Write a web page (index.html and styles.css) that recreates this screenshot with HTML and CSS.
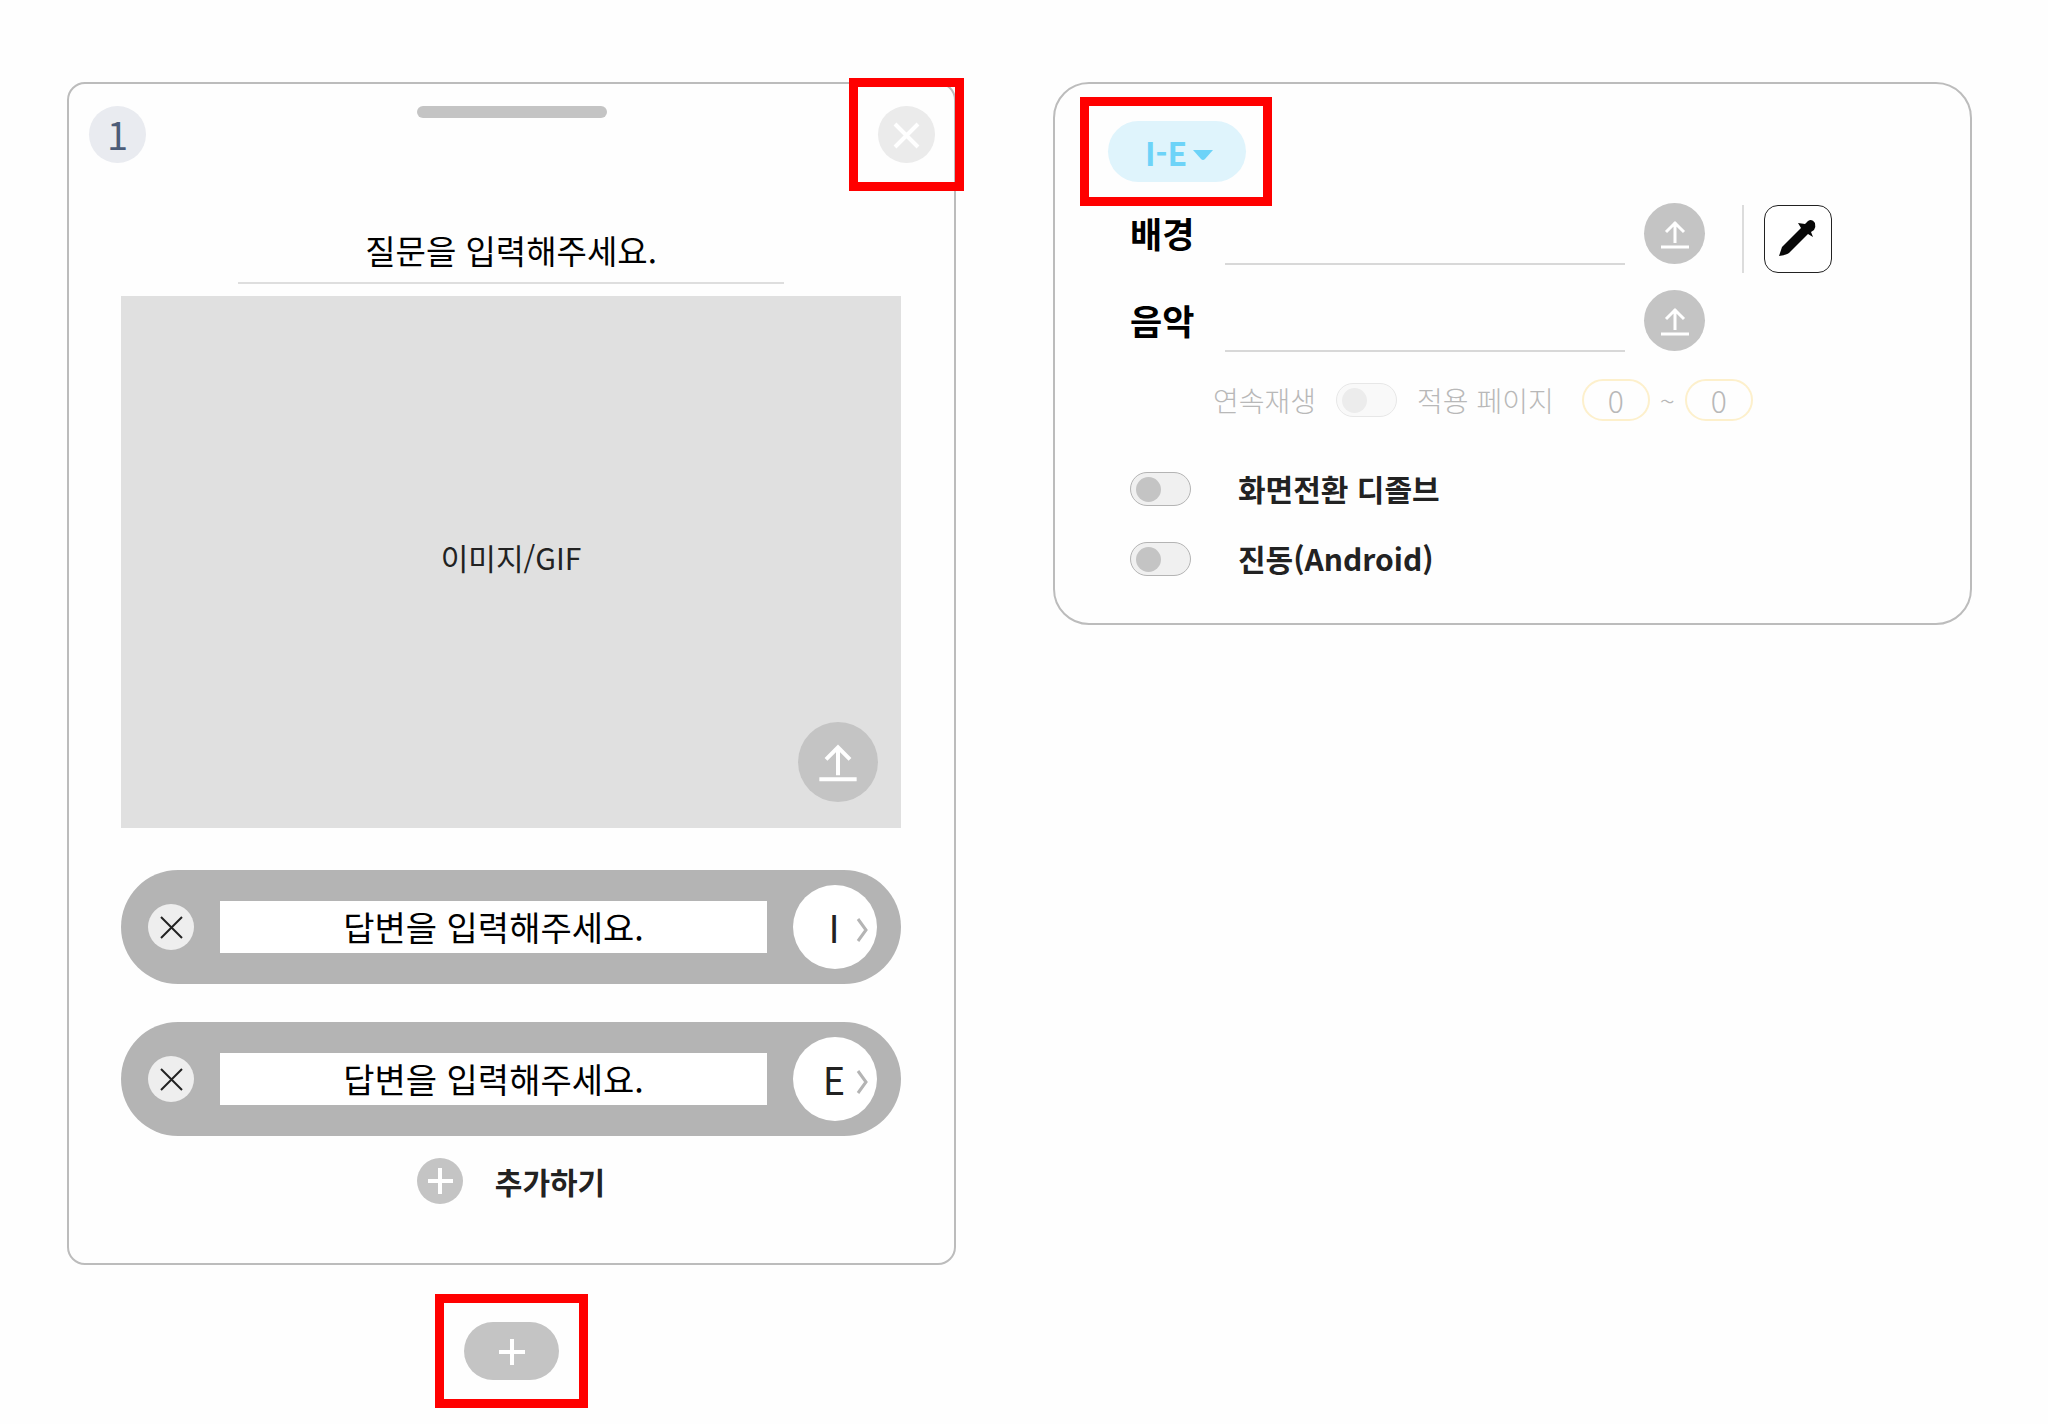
FILE: index.html
```html
<!DOCTYPE html>
<html lang="ko">
<head>
    <meta charset="UTF-8">
    <meta name="viewport" content="width=device-width, initial-scale=1.0">
    <title>질문 편집</title>
    <link rel="stylesheet" href="styles.css">
</head>
<body>

<main class="editor">
    <section class="questionColumn">
        <div class="questionCard">
            <div class="cardHeader">
                <span class="pageNumber">1</span>
                <span class="dragHandle"></span>
                <div class="highlight">
                    <button type="button" class="roundButton closeButton" aria-label="닫기">
                        <svg width="57" height="57" viewBox="0 0 57 57"><path d="M17 18L40 41M40 18L17 41" stroke="#fff" stroke-width="4"/></svg>
                    </button>
                </div>
            </div>

            <div class="cardBody">
                <input type="text" class="questionInput" placeholder="질문을 입력해주세요." aria-label="질문">

                <div class="imageBox">
                    <span>이미지/GIF</span>
                    <button type="button" class="roundButton imageUpload" aria-label="이미지 업로드">
                        <svg width="80" height="80" viewBox="0 0 60 60"><path d="M30 40V19M21 28L30 19L39 28M16 43H44" fill="none" stroke="#fff" stroke-width="3"/></svg>
                    </button>
                </div>

                <div class="answerList">
                    <div class="answer">
                        <button type="button" class="roundButton removeButton" aria-label="답변 삭제">
                            <svg width="46" height="46" viewBox="0 0 46 46"><path d="M13 13L34 34M34 13L13 34" stroke="#222" stroke-width="2"/></svg>
                        </button>
                        <input type="text" class="answerInput" placeholder="답변을 입력해주세요." aria-label="답변 1">
                        <button type="button" class="roundButton typeButton">I
                            <svg class="chevron" width="12" height="24" viewBox="0 0 12 24"><path d="M2 1L10 12L2 23" fill="none" stroke="#b4b4b4" stroke-width="3"/></svg>
                        </button>
                    </div>
                    <div class="answer">
                        <button type="button" class="roundButton removeButton" aria-label="답변 삭제">
                            <svg width="46" height="46" viewBox="0 0 46 46"><path d="M13 13L34 34M34 13L13 34" stroke="#222" stroke-width="2"/></svg>
                        </button>
                        <input type="text" class="answerInput" placeholder="답변을 입력해주세요." aria-label="답변 2">
                        <button type="button" class="roundButton typeButton">E
                            <svg class="chevron" width="12" height="24" viewBox="0 0 12 24"><path d="M2 1L10 12L2 23" fill="none" stroke="#b4b4b4" stroke-width="3"/></svg>
                        </button>
                    </div>
                </div>

                <button type="button" class="addAnswer">
                    <svg width="46" height="46" viewBox="0 0 46 46"><circle cx="23" cy="23" r="23" fill="#c4c4c4"/><path d="M23 10V36M11 23H36" stroke="#fff" stroke-width="4"/></svg>
                    추가하기
                </button>
            </div>
        </div>

        <div class="highlight">
            <button type="button" class="addPage" aria-label="페이지 추가">
                <svg width="28" height="28" viewBox="0 0 28 28"><path d="M14 2V28M1 15H27" stroke="#fff" stroke-width="4"/></svg>
            </button>
        </div>
    </section>

    <section class="settingsCard">
        <div class="highlight highlightType">
            <select class="typeSelect" aria-label="유형">
                <option>I-E</option>
            </select>
            <svg class="caret" width="22" height="12" viewBox="0 0 22 12"><path d="M1 1H21L13 10Q11 12 9 10Z" fill="#6dd3f8"/></svg>
        </div>

        <div class="settings">
            <div class="fileRow">
                <label for="background">배경</label>
                <input type="text" id="background" class="fileInput">
                <button type="button" class="roundButton fileUpload" aria-label="배경 업로드">
                    <svg width="60" height="60" viewBox="0 0 60 60"><path d="M30 39V18M21 28L30 19L39 28M16 43H44" fill="none" stroke="#fff" stroke-width="3"/></svg>
                </button>
                <div class="picker">
                    <button type="button" class="pickerButton" aria-label="색상 선택">
                        <svg width="66" height="66" viewBox="1 1 66 66"><path d="M15 51L18 42L37 23L34 18L41 19L44 16Q48 13 51 18Q52 22 50 25L47 27L49 32L44 29L25 48Q22 50 15 51Z" fill="#080808"/></svg>
                    </button>
                </div>
            </div>

            <div class="fileRow">
                <label for="music">음악</label>
                <input type="text" id="music" class="fileInput">
                <button type="button" class="roundButton fileUpload" aria-label="음악 업로드">
                    <svg width="60" height="60" viewBox="0 0 60 60"><path d="M30 39V18M21 28L30 19L39 28M16 43H44" fill="none" stroke="#fff" stroke-width="3"/></svg>
                </button>
            </div>

            <div class="playRow">
                <label for="repeat">연속재생</label>
                <input type="checkbox" id="repeat" class="toggle" disabled>
                <label for="pageFrom">적용 페이지</label>
                <div class="pageRange">
                    <input type="text" id="pageFrom" class="pageInput" value="0" disabled>
                    <span>~</span>
                    <input type="text" class="pageInput" value="0" aria-label="마지막 페이지" disabled>
                </div>
            </div>

            <div class="toggleRow">
                <input type="checkbox" id="dissolve" class="toggle">
                <label for="dissolve">화면전환 디졸브</label>
            </div>
            <div class="toggleRow">
                <input type="checkbox" id="vibration" class="toggle">
                <label for="vibration">진동(Android)</label>
            </div>
        </div>
    </section>
</main>

</body>
</html>
```
FILE: styles.css
```css
* {
    box-sizing: border-box;
}

body {
    margin: 0;
    background-color: #fefefe;
    color: #222;
    font-family: 'Noto Sans CJK KR', 'Noto Sans', sans-serif;
    font-size: 30px;
}

button, input, select {
    margin: 0;
    padding: 0;
    border: none;
    outline: none;
    color: inherit;
    font-family: inherit;
}

button {
    cursor: pointer;
}

svg {
    display: block;
}

.editor {
    display: flex;
    align-items: flex-start;
    gap: 97px;
    padding: 82px 76px 44px 67px;
}

/* red frame around a control */
.highlight {
    position: relative;
}

.highlight::after {
    content: '';
    position: absolute;
    inset: -28px -29px;
    border: 9px solid #ff0000;
    pointer-events: none;
}

.highlightType::after {
    inset: -24px -26px -24px -28px;
}

.roundButton {
    display: flex;
    justify-content: center;
    align-items: center;
    flex: none;
    border-radius: 50%;
    background-color: #c4c4c4;
}

/* question */
.questionColumn {
    flex: 0 1 889px;
    display: flex;
    flex-direction: column;
    align-items: center;
    gap: 57px;
}

.questionCard {
    width: 100%;
    border: 2px solid #bcbcbc;
    border-radius: 18px;
}

.cardHeader {
    display: flex;
    justify-content: space-between;
    align-items: flex-start;
    padding: 22px 19px 0 20px;
}

.pageNumber {
    width: 57px;
    height: 57px;
    border-radius: 50%;
    background-color: #e9ebf0;
    color: #4c5c78;
    font-size: 38px;
    line-height: 56px;
    text-align: center;
}

.dragHandle {
    width: 190px;
    height: 12px;
    border-radius: 6px;
    background-color: #c4c4c4;
}

.closeButton {
    width: 57px;
    height: 57px;
    background-color: #ebebeb;
}

.cardBody {
    display: flex;
    flex-direction: column;
    align-items: center;
    padding: 55px 53px 59px 52px;
}

.questionInput, .answerInput {
    font-size: 34px;
    text-align: center;
}

.questionInput {
    width: 70%;
    height: 66px;
    border-bottom: 2px solid #dedede;
    background-color: transparent;
    font-size: 33px;
}

.questionInput::placeholder, .answerInput::placeholder {
    color: #000;
    opacity: 1;
}

.imageBox {
    position: relative;
    display: flex;
    justify-content: center;
    align-items: center;
    width: 100%;
    height: 532px;
    margin-top: 12px;
    padding-bottom: 10px;
    background-color: #e0e0e0;
}

.imageUpload {
    position: absolute;
    right: 23px;
    bottom: 26px;
    width: 80px;
    height: 80px;
}

.answerList {
    display: flex;
    flex-direction: column;
    gap: 38px;
    width: 100%;
    margin-top: 42px;
}

.answer {
    display: flex;
    align-items: center;
    gap: 26px;
    height: 114px;
    padding: 0 24px 0 27px;
    border-radius: 57px;
    background-color: #b4b4b4;
}

.removeButton {
    width: 46px;
    height: 46px;
    background-color: #eee;
}

.answerInput {
    flex: 1;
    min-width: 0;
    height: 52px;
    padding-bottom: 2px;
    background-color: #fff;
}

.typeButton {
    position: relative;
    width: 84px;
    height: 84px;
    padding: 0 2px 2px 0;
    background-color: #fff;
    font-size: 38px;
}

.chevron {
    position: absolute;
    top: 33px;
    right: 9px;
}

.addAnswer {
    display: flex;
    align-items: center;
    gap: 32px;
    height: 46px;
    margin-top: 22px;
    background: none;
    font-size: 30px;
    font-weight: 700;
}

.addPage {
    display: flex;
    justify-content: center;
    align-items: center;
    width: 95px;
    height: 58px;
    border-radius: 29px;
    background-color: #c4c4c4;
}

/* settings */
.settingsCard {
    flex: 1;
    padding: 37px 53px 47px;
    border: 2px solid #bcbcbc;
    border-radius: 36px;
}

.highlightType {
    width: 138px;
}

.typeSelect {
    appearance: none;
    display: block;
    width: 100%;
    height: 61px;
    padding-left: 37px;
    border-radius: 31px;
    background-color: #dff4fc;
    color: #6dd3f8;
    font-size: 32px;
    font-weight: 700;
}

.caret {
    position: absolute;
    top: 28px;
    right: 32px;
    pointer-events: none;
}

.settings {
    padding: 21px 0 0 22px;
}

.fileRow {
    display: flex;
    align-items: flex-start;
    margin-bottom: 17px;
}

.fileRow label {
    flex: none;
    width: 95px;
    color: #000;
    font-size: 35px;
    font-weight: 700;
    line-height: 60px;
}

.fileInput {
    flex: 0 1 400px;
    min-width: 0;
    height: 62px;
    border-bottom: 2px solid #d8d8d8;
    background-color: transparent;
    font-size: 30px;
}

.fileUpload {
    width: 61px;
    height: 61px;
    margin-left: 19px;
}

.picker {
    display: flex;
    margin: 2px 0 0 37px;
    padding-left: 20px;
    border-left: 2px solid #dcdcdc;
}

.pickerButton {
    width: 68px;
    height: 68px;
    border: 1px solid #222;
    border-radius: 14px;
    background-color: #fff;
}

.playRow {
    display: flex;
    align-items: center;
    gap: 20px;
    margin: 27px 0 51px 83px;
    color: #b8b8b8;
    font-size: 28px;
    font-weight: 300;
    line-height: 42px;
}

.pageRange {
    display: flex;
    gap: 10px;
    margin-left: 8px;
}

.pageInput {
    width: 68px;
    height: 42px;
    border: 2px solid #fdf0cc;
    border-radius: 21px;
    background-color: transparent;
    font-size: 30px;
    font-weight: 300;
    text-align: center;
}

.toggle {
    appearance: none;
    display: flex;
    align-items: center;
    flex: none;
    width: 61px;
    height: 34px;
    padding-left: 5px;
    border: 1px solid #b4b4b4;
    border-radius: 17px;
    background-color: #f0f0f0;
}

.toggle::before {
    content: '';
    width: 25px;
    height: 25px;
    border-radius: 50%;
    background-color: #c4c4c4;
}

.toggle:checked {
    justify-content: flex-end;
    padding-right: 5px;
}

.toggle:disabled {
    opacity: 0.3;
}

.toggleRow {
    display: flex;
    align-items: center;
    gap: 47px;
    height: 34px;
}

.toggleRow + .toggleRow {
    margin-top: 36px;
}

.toggleRow label {
    padding-bottom: 2px;
    font-weight: 700;
}
```
